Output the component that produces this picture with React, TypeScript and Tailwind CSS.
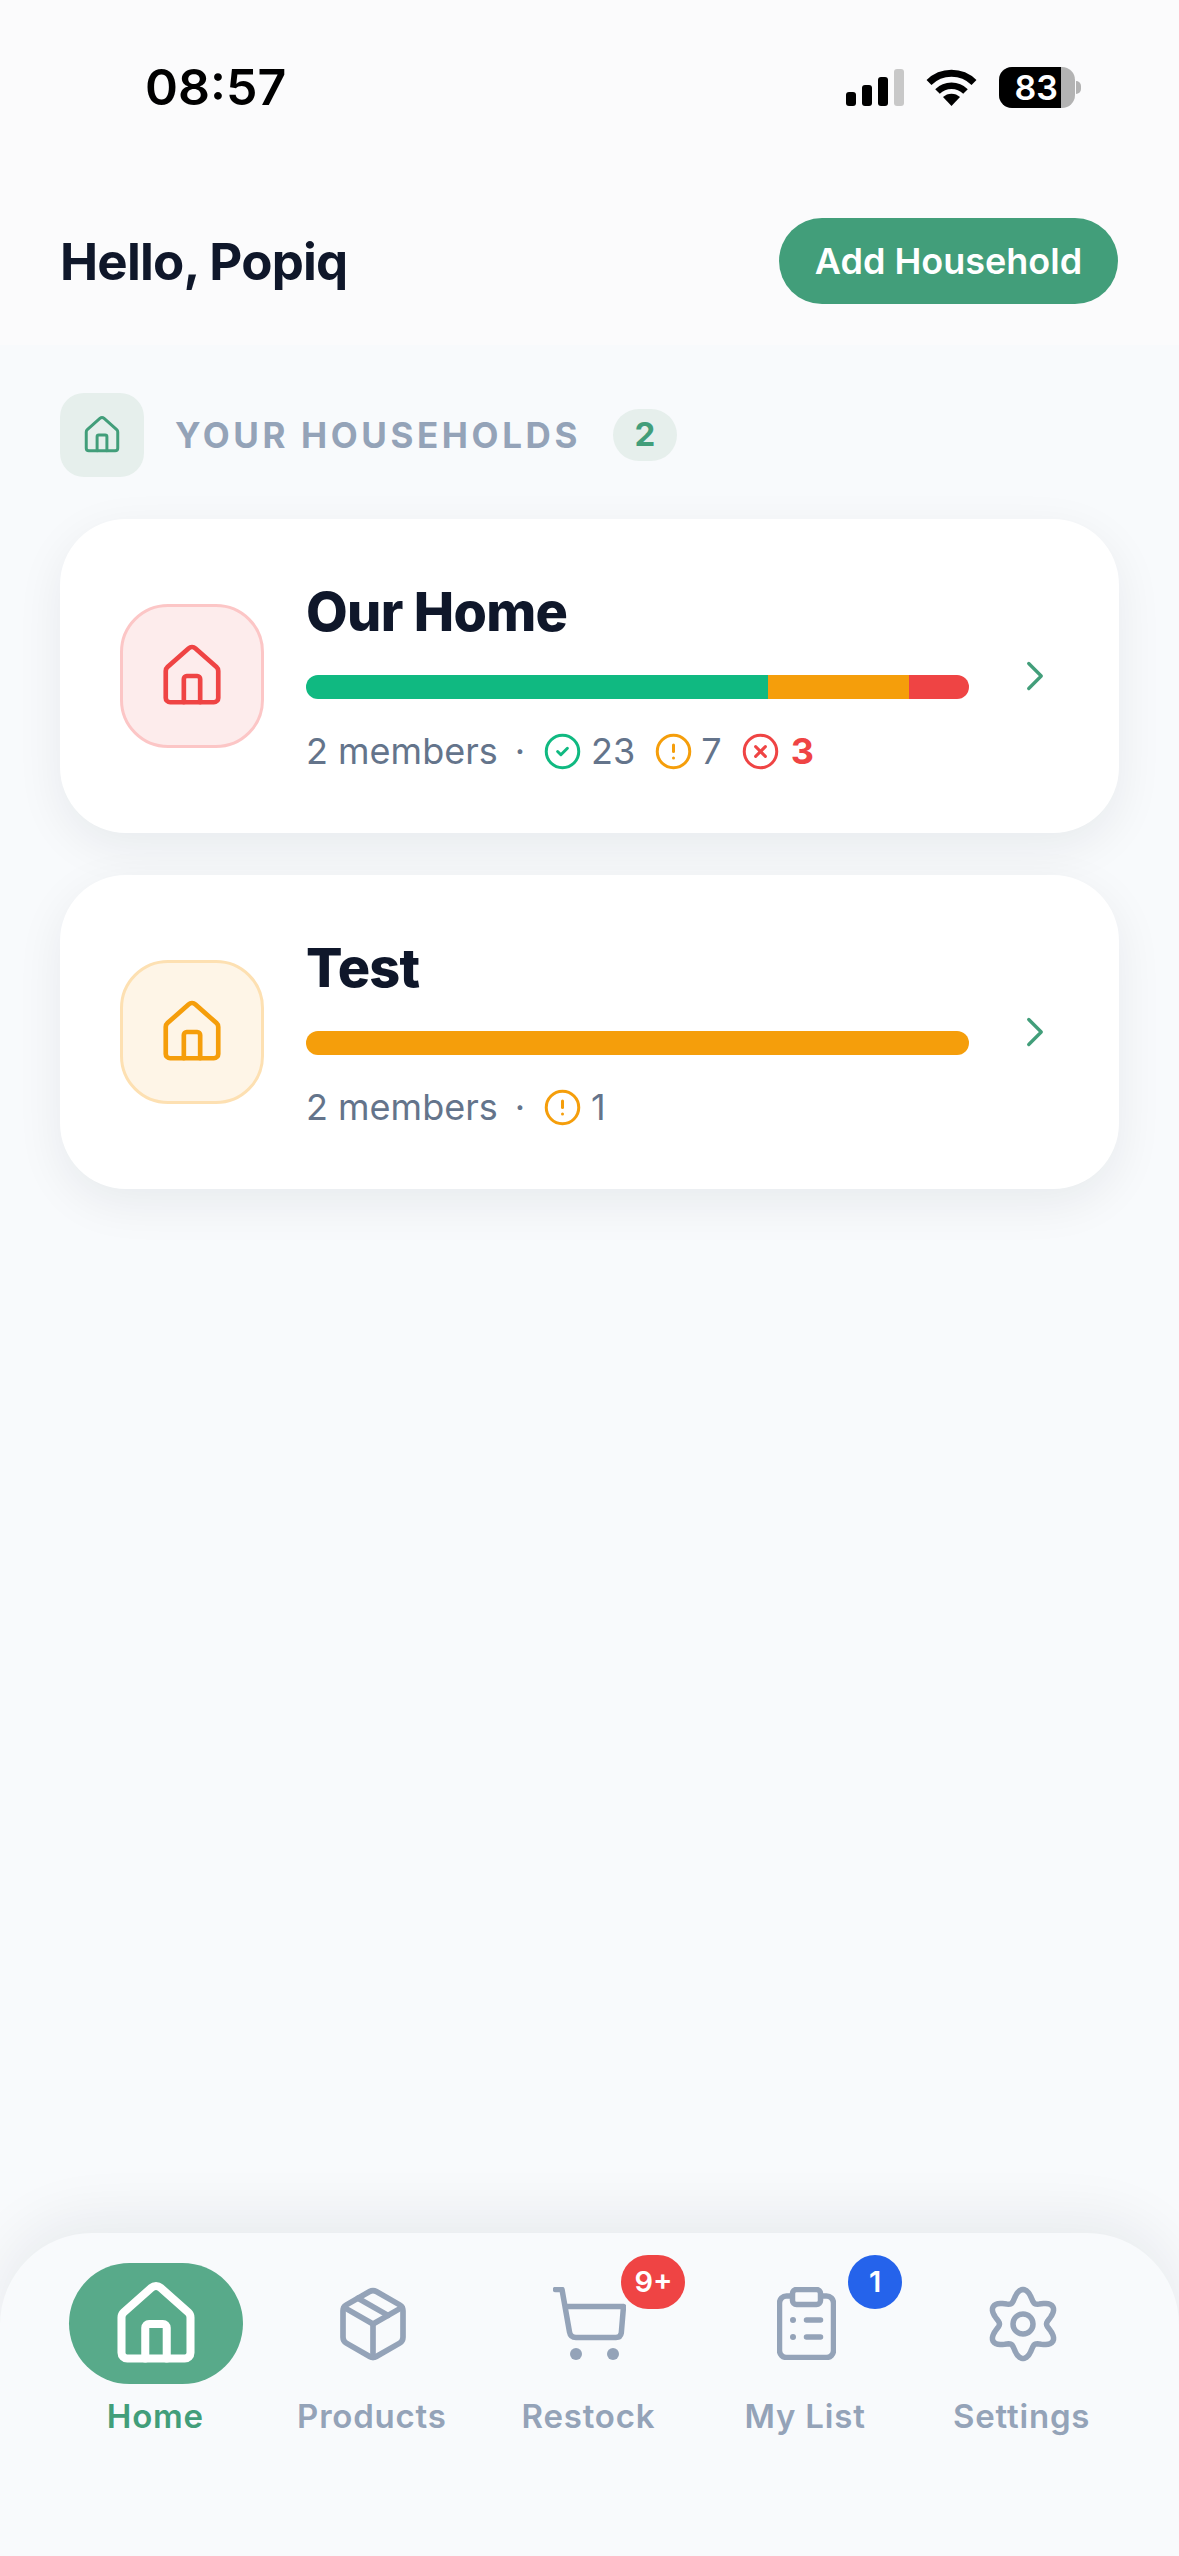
/** @file Household overview screen with status bar, household cards and bottom tab bar. */

import type { ReactNode } from "react";
import { ChevronRight, CircleAlert, CircleCheck, CircleX, Package } from "lucide-react";

function HouseIcon({ size, stroke, className }: { size: number; stroke: number; className: string }) {
  return (
    <svg
      width={size}
      height={size}
      viewBox="0 0 24 24"
      fill="none"
      stroke="currentColor"
      strokeWidth={stroke}
      strokeLinecap="round"
      strokeLinejoin="round"
      className={className}
    >
      <path d="M3 10.3a1.8 1.8 0 0 1 .6-1.35l7.2-6.4a1.8 1.8 0 0 1 2.4 0l7.2 6.4a1.8 1.8 0 0 1 .6 1.35v9.2a1.5 1.5 0 0 1-1.5 1.5h-15A1.5 1.5 0 0 1 3 19.5z" />
      <path d="M9.2 21v-8a1 1 0 0 1 1-1h3.6a1 1 0 0 1 1 1v8" />
    </svg>
  );
}

function StatusBar() {
  return (
    <div className="flex h-[150px] items-start justify-between pl-[145px] pr-[98px] pt-[60px]">
      <span className="text-[50px] font-semibold leading-[55px] text-black">08:57</span>
      <div className="flex items-center pt-[7px]">
        <div className="flex items-end gap-[6px]">
          <div className="h-[14px] w-[10px] rounded-[3px] bg-black" />
          <div className="h-[21px] w-[10px] rounded-[3px] bg-black" />
          <div className="h-[29px] w-[10px] rounded-[3px] bg-black" />
          <div className="h-[37px] w-[10px] rounded-[3px] bg-[#c8c8c8]" />
        </div>
        <svg width="51" height="37" viewBox="0 0 51 37" className="ml-[22px]">
          <path d="M3 13.5A32 32 0 0 1 48 13.5" fill="none" stroke="#000" strokeWidth="7" />
          <path d="M11.5 22.5A20 20 0 0 1 39.5 22.5" fill="none" stroke="#000" strokeWidth="6.5" />
          <path d="M25.5 37 17 28A12.5 12.5 0 0 1 34 28Z" fill="#000" />
        </svg>
        <div className="relative ml-[22px] flex h-[41px] w-[76px] overflow-hidden rounded-[13px] bg-[#b3b3b3]">
          <div className="flex w-[62px] items-center justify-end bg-black pr-[3px]">
            <span className="text-[34px] font-semibold leading-none text-white">83</span>
          </div>
        </div>
        <div className="ml-[1px] h-[13px] w-[5px] rounded-r-full bg-[#b3b3b3]" />
      </div>
    </div>
  );
}

function StatusIcon({ tone, children }: { tone: string; children: ReactNode }) {
  return <span className={`flex h-[39px] w-[39px] shrink-0 items-center justify-center ${tone}`}>{children}</span>;
}

function Meta({ children, className = "" }: { children: ReactNode; className?: string }) {
  return <span className={`text-[36px] leading-[44px] ${className}`}>{children}</span>;
}

function HouseholdCard({
  name,
  iconClass,
  bar,
  stats,
}: {
  name: string;
  iconClass: string;
  bar: ReactNode;
  stats: ReactNode;
}) {
  return (
    <div className="flex h-[314px] items-center rounded-[66px] bg-white pl-[60px] pr-[58px] shadow-[0_14px_48px_rgba(15,23,42,0.07)]">
      <div className={`flex h-[144px] w-[144px] shrink-0 items-center justify-center rounded-[48px] border-[3px] ${iconClass}`}>
        <HouseIcon size={70} stroke={1.6} className="" />
      </div>
      <div className="ml-[42px] flex w-[663px] flex-col">
        <div className="text-[54px] font-extrabold leading-[66px] tracking-[-0.7px] text-[#0f172a]">{name}</div>
        <div className="mt-[30px] flex h-[24px] overflow-hidden rounded-full">{bar}</div>
        <div className="mt-[30px] flex items-center text-[#64748b]">{stats}</div>
      </div>
      <ChevronRight size={50} strokeWidth={1.6} className="ml-[41px] shrink-0 text-[#429e7a]" />
    </div>
  );
}

function CartIcon() {
  return (
    <svg width="73" height="73" viewBox="0 0 73 73" fill="none" stroke="currentColor" strokeWidth="5.5" strokeLinecap="round" strokeLinejoin="round">
      <path d="M2.5 2.5H9l7.5 42.5q1 5.5 6.5 5.5h40q4.5 0 5.3-4.5L70.5 19.5H12" />
      <circle cx="23" cy="67" r="6" fill="currentColor" stroke="none" />
      <circle cx="60" cy="67" r="6" fill="currentColor" stroke="none" />
    </svg>
  );
}

function ListIcon() {
  return (
    <svg width="59" height="73" viewBox="0 0 59 73" fill="none" stroke="currentColor" strokeWidth="5.5" strokeLinecap="round" strokeLinejoin="round">
      <path d="M15 9H9.5a7 7 0 0 0-7 7v47.5a7 7 0 0 0 7 7h40a7 7 0 0 0 7-7V16a7 7 0 0 0-7-7H44" />
      <rect x="15.5" y="2.5" width="28" height="15" rx="4" />
      <circle cx="16" cy="33" r="3" fill="currentColor" stroke="none" />
      <circle cx="16" cy="50" r="3" fill="currentColor" stroke="none" />
      <path d="M29.5 33h14M29.5 50h14" />
    </svg>
  );
}

// six soft lobes, the lucide gear is too angular for this one
const gearPath =
  Array.from({ length: 121 }, (_, i) => {
    const a = (i / 120) * Math.PI * 2;
    const r = 29 + 5.5 * Math.cos(6 * a);
    return `${i === 0 ? "M" : "L"}${(r * Math.sin(a)).toFixed(2)} ${(-r * Math.cos(a)).toFixed(2)}`;
  }).join("") + "Z";

function GearIcon() {
  return (
    <svg width="80" height="80" viewBox="-40 -40 80 80" fill="none" stroke="currentColor" strokeWidth="5.5" strokeLinejoin="round">
      <path d={gearPath} />
      <circle r="10" strokeWidth="5.5" />
    </svg>
  );
}

function NavTab({
  label,
  active = false,
  icon,
  badge,
}: {
  label: string;
  active?: boolean;
  icon: ReactNode;
  badge?: ReactNode;
}) {
  return (
    <div className="flex flex-1 flex-col items-center">
      <div className="relative flex h-[121px] w-[174px] translate-x-[1px] items-center justify-center">
        {icon}
        {badge}
      </div>
      <span className={`mt-[12px] text-[33px] font-semibold leading-[40px] tracking-[0.8px] ${active ? "text-[#429e7a]" : "text-[#94a3b8]"}`}>
        {label}
      </span>
    </div>
  );
}

export default function App() {
  return (
    <div className="flex h-[2556px] w-[1179px] flex-col overflow-hidden bg-[#f8fafc] font-['Inter',sans-serif]">
      <div className="h-[345px] shrink-0 bg-[#fbfbfc]">
        <StatusBar />
        <header className="mt-[68px] flex items-center justify-between pl-[60px] pr-[61px]">
          <h1 className="pt-[2px] text-[51px] font-bold tracking-[-0.8px] text-[#0f172a]">Hello, Popiq</h1>
          <button type="button" className="h-[86px] w-[339px] rounded-full bg-[#429e7a] text-[36px] font-semibold text-white">
            Add Household
          </button>
        </header>
      </div>

      <main className="flex-1 px-[60px] pt-[48px]">
        <div className="flex items-center">
          <div className="flex h-[84px] w-[84px] items-center justify-center rounded-[24px] bg-[#e6efec]">
            <HouseIcon size={42} stroke={1.7} className="text-[#429e7a]" />
          </div>
          <span className="ml-[31px] text-[35px] font-bold leading-none tracking-[3.6px] text-[#94a3b8]">YOUR HOUSEHOLDS</span>
          <span className="ml-[32px] flex h-[52px] w-[64px] items-center justify-center rounded-full bg-[#e6efec] text-[33px] font-bold text-[#429e7a]">
            2
          </span>
        </div>

        <div className="mt-[42px] flex flex-col gap-[42px]">
          <HouseholdCard
            name="Our Home"
            iconClass="border-[#fcc6c6] bg-[#fdecec] text-[#ef4444]"
            bar={
              <>
                <div className="flex-[23] bg-[#10b981]" />
                <div className="flex-[7] bg-[#f59e0b]" />
                <div className="flex-[3] bg-[#ef4444]" />
              </>
            }
            stats={
              <>
                <Meta>2 members</Meta>
                <Meta className="ml-[17px]">·</Meta>
                <StatusIcon tone="ml-[18px] text-[#10b981]"><CircleCheck size={39} strokeWidth={1.85} /></StatusIcon>
                <Meta className="ml-[9px]">23</Meta>
                <StatusIcon tone="ml-[19px] text-[#f59e0b]"><CircleAlert size={39} strokeWidth={1.85} /></StatusIcon>
                <Meta className="ml-[8px]">7</Meta>
                <StatusIcon tone="ml-[19px] text-[#ef4444]"><CircleX size={39} strokeWidth={1.85} /></StatusIcon>
                <Meta className="ml-[11px] font-bold text-[#ef4444]">3</Meta>
              </>
            }
          />
          <HouseholdCard
            name="Test"
            iconClass="border-[#fde0b2] bg-[#fef5e7] text-[#f59e0b]"
            bar={<div className="flex-1 bg-[#f59e0b]" />}
            stats={
              <>
                <Meta>2 members</Meta>
                <Meta className="ml-[17px]">·</Meta>
                <StatusIcon tone="ml-[18px] text-[#f59e0b]"><CircleAlert size={39} strokeWidth={1.85} /></StatusIcon>
                <Meta className="ml-[9px]">1</Meta>
              </>
            }
          />
        </div>
      </main>

      <nav className="flex h-[323px] shrink-0 items-start rounded-t-[92px] bg-[#f8fafc] pl-[47px] pr-[49px] pt-[30px] shadow-[0_-14px_60px_rgba(15,23,42,0.07)]">
        <NavTab
          label="Home"
          active
          icon={
            <div className="flex h-[121px] w-[174px] items-center justify-center rounded-full bg-[#58aa8a]">
              <HouseIcon size={92} stroke={2.1} className="text-white" />
            </div>
          }
        />
        <NavTab label="Products" icon={<Package size={80} strokeWidth={1.7} className="text-[#94a3b8]" />} />
        <NavTab
          label="Restock"
          icon={<span className="text-[#94a3b8]"><CartIcon /></span>}
          badge={
            <span className="absolute left-[119px] top-[-8px] flex h-[54px] w-[64px] items-center justify-center rounded-full bg-[#ef4444] text-[29px] font-semibold text-white">
              9+
            </span>
          }
        />
        <NavTab
          label="My List"
          icon={<span className="text-[#94a3b8]"><ListIcon /></span>}
          badge={
            <span className="absolute left-[129px] top-[-8px] flex h-[54px] w-[54px] items-center justify-center rounded-full bg-[#2563eb] text-[29px] font-semibold text-white">
              1
            </span>
          }
        />
        <NavTab label="Settings" icon={<span className="text-[#94a3b8]"><GearIcon /></span>} />
      </nav>
    </div>
  );
}
